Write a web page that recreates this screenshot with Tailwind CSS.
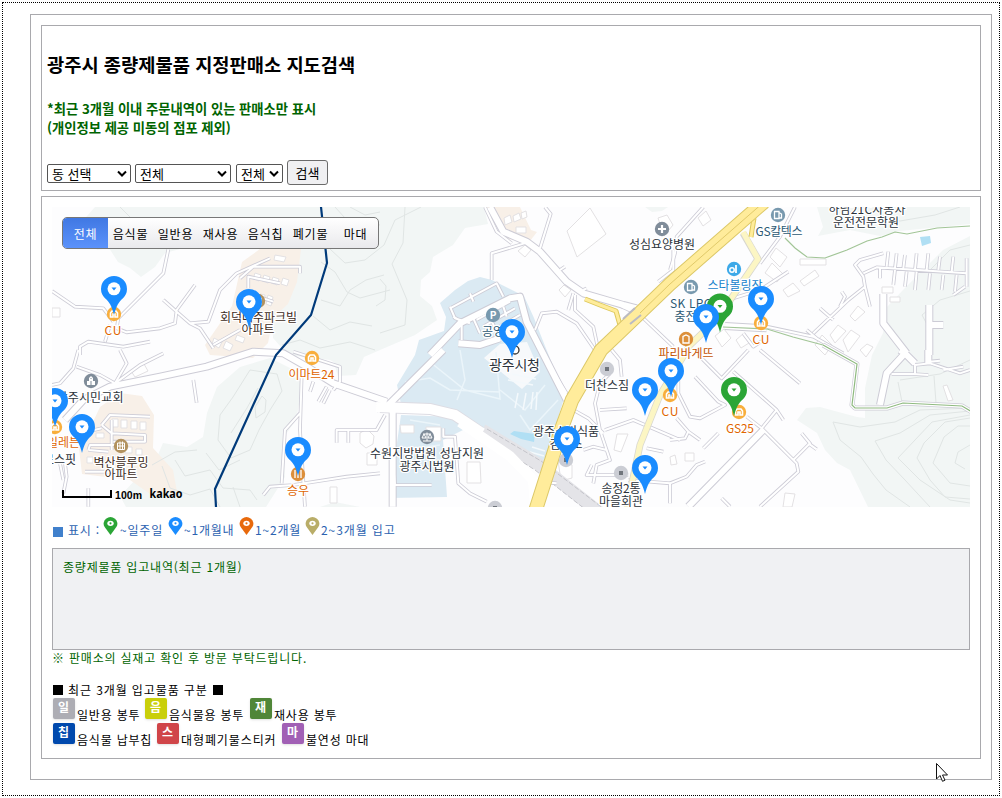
<!DOCTYPE html>
<html lang="ko">
<head>
  <meta charset="UTF-8" />
  <meta name="viewport" content="width=device-width, initial-scale=1.0" />
  <title>광주시 종량제물품 지정판매소 지도검색</title>
  <script src="https://cdn.jsdelivr.net/npm/@tailwindcss/browser@4"></script>
</head>
<body class="bg-white text-black font-['Noto_Sans_CJK_KR',sans-serif] w-[1002px] h-[798px] overflow-hidden p-[2px]">
  <div class="border border-dotted border-black w-[998px] h-[794px] pl-[27px] pt-[11px]">
    <div class="border border-[#a9a9ad] w-[962px] h-[766px] p-[10px]">

      <!-- Search -->
      <section class="border border-[#a9a9ad] h-[166px] w-[940px] pl-[5px] pt-[24px]">
        <h3 class="text-[18.72px] leading-[27px] font-bold">광주시 종량제물품 지정판매소 지도검색</h3>
        <h4 class="mt-[22px] text-[13.33px] leading-[19px] tracking-[-0.03px] font-bold text-[#006400]">*최근 3개월 이내 주문내역이 있는 판매소만 표시<br>(개인정보 제공 미동의 점포 제외)</h4>
        <form class="mt-[23px] flex items-start text-[13px] leading-[17px]">
          <div class="relative mt-[4px] w-[84px] h-[19px] border border-[#555] rounded-[2px] pl-[4px]">동 선택
            <svg class="absolute right-[3px] top-[5px]" width="10" height="8" fill="none" stroke="#000" stroke-width="2"><path d="M1 1.5 5 5.5 9 1.5"/></svg>
          </div>
          <div class="relative mt-[4px] ml-[4px] w-[96px] h-[19px] border border-[#555] rounded-[2px] pl-[4px]">전체
            <svg class="absolute right-[3px] top-[5px]" width="10" height="8" fill="none" stroke="#000" stroke-width="2"><path d="M1 1.5 5 5.5 9 1.5"/></svg>
          </div>
          <div class="relative mt-[4px] ml-[5px] w-[47px] h-[19px] border border-[#555] rounded-[2px] pl-[4px]">전체
            <svg class="absolute right-[3px] top-[5px]" width="10" height="8" fill="none" stroke="#000" stroke-width="2"><path d="M1 1.5 5 5.5 9 1.5"/></svg>
          </div>
          <button type="button" class="ml-[4px] w-[41px] h-[25px] border border-[#6b6b6b] rounded-[3px] bg-[#f0f0f2]">검색</button>
        </form>
      </section>

      <section class="mt-[5px] border border-[#a9a9ad] h-[563px] w-[940px] p-[10px] text-[12px] tracking-[0.8px]">
        <!-- Map -->
        <div class="relative h-[300px] w-[918px] overflow-hidden">
          <svg class="block tracking-normal" width="918" height="300" viewBox="52 207 918 300" font-size="12" text-anchor="middle">
            <defs>
              <g id="pin">
                <path d="M0 39.500C-2 31-5 26-9 22.800A13 13 0 1 1 9 22.800C5 26 2 31 0 39.500Z"/>
                <circle cy="13.300" r="6.500" fill="#fff"/>
                <path d="M-2.500 12h5L0 15Z"/>
              </g>
              <g id="store" fill="none" stroke="#fff" stroke-width="1.600"><circle r="7.200" fill="#f8ae3c" stroke="none"/><path d="M-3.500 3V-1L-2-3H2L3.500-1V3H1V0H-1V3Z"/></g>
              <g id="apt"><circle r="7.200" fill="#b2925f"/><path d="M-3.500-3H3.500V3.500H-3.500ZM-1-4.500V3.500M1.500-4.500V3.500M-3.500 0H3.500" fill="none" stroke="#fff" stroke-width="1"/></g>
              <g id="gas"><circle r="7.200" fill="#7899ae"/><path d="M-3.500-3.500H1V3.500H-3.500ZM1-2.500 3.500-1V3H1" fill="none" stroke="#fff" stroke-width="1.300"/></g>
              <g id="spot"><circle r="7.200" fill="#cbcdd4"/><path d="M-2-2H2V2H-2Z" fill="#70757c"/></g>

              <!-- road classes, one path per survey tile -->
              <g id="lanes" fill="none" stroke-linejoin="round">
                <path transform="translate(40 195) scale(.3333)" d="M36 288 105 335 190 340 220 380 M385 163 370 235 235 370 230 400 260 412 360 400 405 385 410 345 465 270 M370 315 410 350 450 385 505 380 540 285 590 235 690 190 M120 480 120 455 145 440 250 455 330 440 M195 440 210 390 M450 385 480 400 520 460 M600 250 640 215 780 215 780 235 M625 280 625 245 720 265 M610 290 700 320 M520 450 600 405"/>
                <path transform="translate(40 350) scale(.3333)" d="M36 105 60 100 100 55 115 0 M110 50 180 75 225 100 260 40 240 0 M225 100 300 45 370 10 M460 90 470 158 M785 80 780 240 795 470 M780 190 735 240 725 400 M670 435 690 410 760 405 920 380 1020 370 M1035 195 1010 240 890 240 890 278 M925 240 925 278 M760 5 900 50 900 95 880 120 M860 110 835 155 M870 120 850 160 M820 95 810 125 M185 225 210 195 330 200 M185 225 215 250 315 255 315 275 220 275 M215 210 215 300 M145 300 150 285 240 285 M145 300 205 305 M120 250 185 235 M135 365 230 365 M60 340 70 390 M75 340 80 380 70 430 M145 415 145 470"/>
                <path transform="translate(380 200) scale(.3333)" d="M315 21 350 95 395 130 M495 21 512 42 480 145 M440 128 335 160 335 240 M540 210 555 200 M610 270 620 265 M880 150 880 210 835 245 M580 280 565 330 M585 285 585 330 640 380 655 450 M465 390 485 340 530 335 590 370 645 450 M210 325 350 250 370 290 M210 320 225 355 270 370 M270 280 280 305 M220 350 245 365 245 420 M290 360 390 305 M310 380 405 325 M350 385 420 345 M280 355 300 400 M325 340 345 385 M370 320 380 350 M725 320 780 345 880 440"/>
                <path transform="translate(380 350) scale(.3333)" d="M580 180 625 205 670 250 M695 0 720 30 725 80 M690 70 660 100 645 160 660 240 690 330 650 345 640 400 M660 180 740 175 M675 240 760 210 900 270 M800 295 850 305 M635 345 620 375 745 375 M610 300 640 290 680 300 M745 390 870 400 870 460 M190 235 190 260 225 260 235 400 270 430 320 455 M40 350 45 405 155 405 M480 395 530 400 M490 15 560 130"/>
                <path transform="translate(670 200) scale(.3333)" d="M0 210 15 160 20 110 100 21 M375 21 330 110 270 190 M640 160 570 180 555 195 580 230 585 260 535 300 430 400 M580 220 620 202 890 220 M655 155 650 200 M680 160 675 205 M705 165 700 205 M740 160 735 210 M775 160 770 210 M810 170 805 210 M850 170 845 215 M890 175 890 260 M630 200 630 235 M675 210 670 255 M710 215 705 260 M740 215 735 270 M780 220 775 270 M820 225 815 270 M860 225 855 275 M885 260 850 285 M585 260 600 320 M450 325 490 360 M515 275 525 290 510 320 M410 390 440 415 M190 295 270 270 355 215 M290 380 430 410 520 460 M220 400 250 440 280 420"/>
                <path transform="translate(670 350) scale(.3333)" d="M25 90 25 130 60 200 90 205 165 165 145 155 75 80 M90 20 155 85 235 0 M270 0 390 100 M190 65 320 180 340 210 M320 180 275 235 230 200 M275 235 380 340 385 365 270 470 M370 330 420 280 395 250 M415 280 440 298 M0 270 45 265 55 245 20 205 M55 245 90 270 M100 295 145 250 M0 400 50 380 80 345 105 335 M155 445 180 470 M665 72 730 72 775 75 M735 70 735 45 720 30 M735 45 780 40 870 70 900 60 M780 35 810 32 M820 60 880 50"/>
              </g>
              <g id="streets" fill="none" stroke-linejoin="round">
                <path transform="translate(40 350) scale(.3333)" d="M75 210 130 150 210 110 360 80 500 50 640 5 730 10 800 50 880 100 1040 155"/>
                <path transform="translate(380 200) scale(.3333)" d="M330 21 370 95 440 125 480 155 560 245 610 280 730 315 770 325 M150 465 240 370 390 295 420 290 440 365 560 600 M235 430 300 435 360 415"/>
                <path transform="translate(380 350) scale(.3333)" d="M-10 175 20 170 60 130 190 0 M38 180 38 470"/>
                <path transform="translate(670 200) scale(.3333)" d="M640 282 640 370 710 460 M778 315 778 465 M778 375 820 375 M165 378 290 385"/>
                <path transform="translate(670 350) scale(.3333)" d="M55 470 280 240 M630 165 650 70 705 10 735 40 M705 10 690 0 M775 0 775 40"/>
              </g>
              <clipPath id="frame"><path d="M52 207H970V507H52Z"/></clipPath>
            </defs>
            <g clip-path="url(#frame)">
              <path fill="#fdfdfe" d="M52 207H970V507H52Z"/>

              <!-- hills -->
              <g fill="#f2f6f5">
                <path d="M95 207 79 225 97 250 109 248 118 262 130 268 141 277 155 267 165 253 180 249 300 249 296 280 272 316 273 338 288 355 330 360 356 375 364 357 380 350 415 335 437 320 432 306 420 296 421 280 430 272 433 257 453 245 465 228 488 224 484 207Z"/>
                <path d="M240 367 270 358 296 371 303 383 296 420 284 437 285 477 266 507 126 507 120 496 157 457 163 443 187 447 203 437 207 413 217 387Z"/>
                <path d="M333 360 345 359 356 375 338 376Z"/>
                <path d="M645 207 652 212 662 211 668 207Z M817 207 823 227 818 236 850 230 880 236 900 231 970 224V207Z M970 236 943 250 903 290 887 307 883 333 872 355 865 388V418L857 417 820 407 806 408 797 420 817 433 825 450 837 463 850 470 868 507H970Z"/>
                <path d="M320 507 335 502 360 507Z"/>
              </g>
              <path fill="#f8f0e8" d="M260 249H301L297 282 288 304 273 318 268 343 253 358 210 355 205 345 232 306 242 262Z M100 407 120 393 142 396 154 415 153 448 173 470 177 492 150 494 130 480 82 474 78 440 92 424Z M487 207 505 239 530 241 537 232 531 230 520 207Z"/>

              <!-- contours -->
              <g fill="none" stroke="#e0e5e4" stroke-width="1">
                <path d="M120 207 135 222 175 218 210 232 240 223 M335 207 345 218 380 225 M350 207 365 215 380 212 M330 249 345 263 365 260 384 245 395 220 421 207 M321 300 340 306 350 290 366 280 384 275 M313 316 330 330 350 322 372 326 M321 262 335 272 347 292 360 298 390 290 M405 207 403 243 392 264 407 300 405 325 380 333 M380 279 386 286 385 300 376 306 M282 345 300 340 320 348 350 342 375 350"/>
                <path d="M250 370 233 397 220 415 218 440 231 458 250 450 259 430 270 410 282 391 277 374Z M258 388 247 408 231 433 M262 396 255 407 256 418 265 412 266 400Z M175 460 185 476 210 470 223 488 250 490 257 500 M162 466 170 488 190 495 210 489 220 507 M206 453 219 470 240 460 M240 507 233 487 M152 465 175 452 197 450"/>
                <path d="M833 422 840 440 861 457 873 474 886 490 910 507 M833 422 860 427 895 422 920 410 970 408 M875 441 900 433 930 415 970 411 M875 441 886 460 905 480 930 507 M898 458 915 440 932 422 970 415 M898 458 920 480 950 500 970 503 M917 458 924 443 945 422 970 418 M917 458 930 480 945 497 970 499 M933 463 944 437 958 426 970 426 M933 463 950 483 970 486 M970 445 958 452 955 463 965 469 M845 207 860 220 900 221 935 215 960 207 M930 270 950 250 970 245 M930 330 922 315 940 300 970 291 M900 380 940 374 970 360 M898 382 902 402 M934 376 936 403"/>
              </g>

              <!-- civic grounds -->
              <path fill="#dbeaf3" d="M415 355 419 340 444 331 446 317 440 303 455 290 468 281 480 277 492 280 524 296 534 318 545 346 565 395 556 425 549 459 535 465 510 455 486 430 457 411 430 407 401 404 397 385Z M401 415 458 417 463 430 443 440 447 497 389 498Z"/>
              <path fill="#f7f9fb" d="M484 358 500 344 527 342 540 372 522 389 506 376Z"/>
              <g fill="none" stroke="#ebf5fa" stroke-width="1.500">
                <path d="M430 362 465 390 500 399 496 352 M405 382 430 378 450 390 500 392 M460 350 465 380 457 400 M500 390 525 410 545 385 M520 415 530 430 558 400 M410 420 440 425 M405 450 440 445"/>
              </g>
              <path fill="none" stroke="#f4f9fc" stroke-width="1.500" d="M518 393 515 408M526 393 523 410M533 392 531 409M537 392 536 410M532 447 545 451M530 452 544 456M533 385 508 380M536 379 512 374"/>
              <path fill="#b0dff4" d="M510 434 514 431 535 434 534 442 521 439Z M920 237 930 236 931 243 922 246Z"/>

              <!-- buildings -->
              <g fill="#fff" stroke="#e3e1e3" stroke-width="1">
                <path d="M567 231 590 208 606 234 577 257Z M518 251 525 245 531 250 525 257Z M559 290 564 285 571 290 565 297Z M658 218 667 215 673 225 664 236Z M516 227H526V233H516Z M800 259H826V265H800Z M882 287H893V293H882Z M890 297H900V302H890Z"/>
                <path d="M255 273 261 275 259 281 253 279Z M264 275 270 277 268 283 262 281Z M273 277 279 279 277 285 271 283Z M283 278 289 280 287 286 281 284Z M275 255 286 257 284 262 274 260Z M214 338 222 342 219 348 212 344Z M226 341 233 345 230 351 223 348Z M260 294 265 295 264 305 259 304Z M268 295 273 297 271 306 266 304Z M237 335 245 338 243 343 235 340Z"/>
                <path d="M112 419H118V427H112Z M121 420H127V428H121Z M131 421H137V429H131Z M140 422H146V430H140Z M125 447H132V453H125Z M136 449H142V455H136Z M96 433H104V438H96Z M87 457H93V463H87Z M330 487H337V503H330Z M360 433 367 429 374 436 373 444 366 448 360 443Z M367 453H377V465H367Z M131 371 144 364 148 371 135 377Z M52 308H60V317H52Z"/>
                <path d="M504 218 510 215 512 222 505 225Z M513 216 519 213 521 219 514 222Z M521 213 526 211 527 217 522 219Z M467 462 480 462 481 483 467 483Z M400 425 414 425 414 433 401 433Z M426 427 441 427 441 441 426 441Z M558 460 572 465 572 478 561 481Z M617 434 628 434 621 452 614 450Z"/>
                <path d="M698 218 706 211 711 220 703 226Z M770 257 776 248 787 257 780 267Z M765 273 772 263 783 274 777 282Z M783 290 793 283 800 291 788 297Z M800 281 815 270 819 276 804 286Z M715 336 724 329 731 338 722 347Z M736 340 744 333 749 343 741 348Z M850 316 858 306 865 312 855 321Z M830 335 838 325 846 331 835 343Z M843 340 851 330 860 336 848 352Z M815 345 822 335 832 345 825 355Z M785 493 795 494 792 507H783Z M685 453H694V461H685Z M670 457 675 455 677 464 671 465Z M943 386 947 385 953 400 948 401Z M860 350 867 344 873 347 866 357Z"/>
              </g>

              <!-- railway -->
              <path fill="none" stroke="#e4e4e8" stroke-width="13" d="M482 430 538 464 600 513"/>
              <path fill="none" stroke="#c4c4ca" stroke-dasharray="5 2" d="M487 429 541 461 604 509M482 436 535 470 590 513"/>

              <use href="#lanes" stroke="#cdccd6" stroke-width="11"/>
              <use href="#streets" stroke="#cdccd6" stroke-width="24"/>
              <path fill="none" stroke="#dddce3" stroke-width="12" d="M380 407 430 409 455 415 480 432"/>
              <use href="#lanes" stroke="#fff" stroke-width="6"/>
              <use href="#streets" stroke="#fff" stroke-width="18"/>
              <path fill="none" stroke="#fff" stroke-width="10" d="M376 407 430 409 455 415 482 433"/>
              <path fill="none" stroke="#fff" stroke-width="10" d="M460 422 510 456 533 480 535 507"/>

              <!-- arterials -->
              <g fill="none" stroke-linejoin="round">
                <path stroke="#d8d7cf" stroke-width="7" d="M743 233 758 259 718 318 690 345 660 395 640 445 627 507"/>
                <path stroke="#fcf6c4" stroke-width="5.500" d="M743 232 758 259 718 318 690 345 660 395 640 445 627 507"/>
                <path stroke="#dec95c" stroke-width="5" d="M585 299 600 305 616 311 620 325M754 218 751 237"/>
                <path stroke="#ffec9b" stroke-width="3" d="M585 299 600 305 616 311 620 325M754 218 751 237"/>
                <path stroke="#dcc868" stroke-width="14.500" d="M764 202 670 284 621 331 601 350 572 400 561 430 549 468 535 512"/>
                <path stroke="#ffec9b" stroke-width="12.500" d="M764 202 670 284 621 331 601 350 572 400 561 430 549 468 535 512"/>
                <path stroke="#d2ba55" stroke-width=".7" d="M764 202 670 284 640 313"/>
                <path stroke="#babac2" stroke-width="2" d="M623 319 635 308M630 324 641 315"/>
              </g>
              <path fill="none" stroke="#a2c597" stroke-width="1.200" d="M785 238 795 248 807 257 825 258 847 250 867 241 882 237 895 232 907 234 937 228 970 226M723 327 767 329 793 337 823 345"/>
              <path fill="none" stroke="#cdccd6" stroke-width="5" stroke-linejoin="round" d="M823 345 857 364 852 405 855 408 887 408 903 403 962 406 972 412"/>
              <path fill="none" stroke="#fff" stroke-width="3.600" stroke-linejoin="round" d="M823 345 857 364 852 405 855 408 887 408 903 403 962 406 972 412"/>
              <path fill="none" stroke="#8fba80" stroke-width="1.200" d="M823 345 857 364 852 405 855 408 887 408 903 403 962 406 972 412"/>
              <path fill="none" stroke="#003a7a" stroke-width="2.200" d="M321 207 327 263 311 315 276 355 215 489 216 507"/>

              <!-- place icons -->
              <use href="#store" x="114" y="314"/><use href="#store" x="312" y="358"/><use href="#store" x="55" y="427"/>
              <use href="#store" x="761" y="323"/><use href="#store" x="670" y="395"/><use href="#store" x="739" y="412"/>
              <use href="#apt" x="258" y="301"/><use href="#apt" x="121" y="446"/>
              <use href="#gas" x="778" y="215"/><use href="#gas" x="691" y="287"/>
              <use href="#spot" x="607" y="369"/><use href="#spot" x="621" y="473"/><use href="#spot" x="566" y="460"/><use href="#spot" x="495" y="508"/>
              <circle cx="298" cy="474" r="7.200" fill="#dc8f3a"/><path stroke="#fff" stroke-width="1.300" d="M295 470V478M298 470V478M301 470V478"/>
              <circle cx="686" cy="339" r="7.200" fill="#dc8f3a"/><path fill="none" stroke="#fff" stroke-width="1.300" d="M683 343V336.500L686 335 689 336.500V343Z"/>
              <circle cx="91" cy="381" r="7.200" fill="#808d9a"/><path fill="#fff" d="M87 385V381H89V378L91 376 93 378V381H95V385Z"/><path stroke="#808d9a" d="M91 381V385M91 378V379"/>
              <circle cx="427" cy="437" r="7.200" fill="#808d9a"/><path fill="none" stroke="#fff" d="M427 432.500V441M423 441H431M423 434H431M422 438 424 434 426 438ZM428 438 430 434 432 438Z"/>
              <circle cx="662" cy="229" r="7.200" fill="#808d9a"/><path stroke="#fff" stroke-width="2.200" d="M658 229H666M662 225V233"/>
              <circle cx="734" cy="269" r="7.200" fill="#3da9e8"/><circle cx="732" cy="270" r="2.200" fill="none" stroke="#fff" stroke-width="1.500"/><path stroke="#fff" stroke-width="1.800" d="M736 265V273"/>
              <circle cx="493" cy="315" r="7.200" fill="#7899ae"/><text x="493" y="319" font-size="10" font-weight="700" fill="#fff">P</text>
              <circle cx="515" cy="350" r="4" fill="#fff" stroke="#333" stroke-width="1.300"/>

              <!-- place names -->
              <g transform="translate(0 .8)" stroke="#fff" stroke-width="2.500" paint-order="stroke" stroke-linejoin="round" fill="#2b323a">
                <g fill="#e06500"><text x="113" y="334.500" textLength="17">CU</text><text x="311.500" y="378" textLength="46">이마트24</text><text x="80" y="446" text-anchor="end">세븐일레븐</text><text x="298" y="494.500">승우</text><text x="761" y="343.500" textLength="17">CU</text><text x="670" y="415.500" textLength="17">CU</text><text x="740" y="432.500" textLength="28">GS25</text></g>
                <g fill="#3d2b22"><text x="258.500" y="321" textLength="77">회덕대주파크빌</text><text x="258" y="333.500">아파트</text><text x="121" y="466" textLength="55">벽산블루밍</text><text x="121" y="478.500">아파트</text></g>
                <text x="90" y="401" textLength="67">광주시민교회</text><text x="76" y="463" text-anchor="end">로스핏</text>
                <text x="427" y="457.500" textLength="114">수원지방법원 성남지원</text><text x="427" y="470" textLength="55">광주시법원</text>
                <text x="514.500" y="369.500" font-size="14" textLength="51">광주시청</text><text x="607" y="389">더찬스짐</text>
                <text x="566" y="435" textLength="66">광주소비식품</text><text x="566" y="448">검사소</text>
                <text x="621" y="492" textLength="39">송정2통</text><text x="621" y="505.500">마을회관</text>
                <text x="662" y="248" textLength="66">성심요양병원</text><text x="867" y="213" textLength="77">하남21C자동차</text><text x="866" y="226" textLength="66">운전전문학원</text>
                <g fill="#2b5873"><text x="482" y="335" text-anchor="start">공영</text><text x="779" y="235" textLength="47">GS칼텍스</text><text x="691" y="307" textLength="42">SK LPG</text><text x="691" y="320">충전소</text></g>
                <text x="735" y="289" textLength="55" fill="#1682cb">스타볼링장</text><text x="686" y="357.500" textLength="55" fill="#c45403">파리바게뜨</text>
              </g>

              <!-- shop pins -->
              <g fill="#2ba536"><use href="#pin" x="720" y="293"/><use href="#pin" x="734" y="376.500"/></g>
              <g fill="#1a8cff">
                <use href="#pin" x="114" y="275.500"/><use href="#pin" x="249" y="288.500"/><use href="#pin" x="512" y="318.500"/>
                <use href="#pin" x="761" y="285.500"/><use href="#pin" x="706" y="303.500"/><use href="#pin" x="671" y="357.500"/>
                <use href="#pin" x="645" y="376.500"/><use href="#pin" x="645" y="454.500"/><use href="#pin" x="567" y="425.500"/>
                <use href="#pin" x="298" y="436.500"/><use href="#pin" x="82" y="413.500"/><use href="#pin" x="55" y="387.500"/>
              </g>

              <path fill="none" stroke="#000" stroke-width="2" d="M63 490V497H111V490"/>
              <text x="128.500" y="499" font-family="Liberation Sans" font-size="10.500" font-weight="700" textLength="27">100m</text>
              <text x="166" y="498" font-family="Noto Sans" font-size="13" font-weight="700" textLength="33" lengthAdjust="spacingAndGlyphs">kakao</text>
            </g>
          </svg>
          <!-- Category filter -->
          <ul class="absolute left-[10px] top-[10px] flex w-[317px] h-[32px] overflow-hidden rounded-[5px] border border-[#777] bg-gradient-to-b from-white to-[#e9e9ec] leading-[31px] text-center">
            <li class="w-[45px] bg-gradient-to-b from-[#4078e3] to-[#5b92fb] text-white">전체</li>
            <li class="w-[45px]">음식물</li>
            <li class="w-[45px]">일반용</li>
            <li class="w-[45px]">재사용</li>
            <li class="w-[45px]">음식칩</li>
            <li class="w-[45px]">폐기물</li>
            <li class="w-[45px]">마대</li>
          </ul>
        </div>

        <!-- Legend -->
        <div class="mt-[8px] flex h-[24px] items-start leading-[29px] text-[#2b62b0] whitespace-nowrap">
          <i class="mt-[12px] ml-[1px] mr-[5px] size-[10px] bg-[#4080cc]"></i>
          <span class="w-[35px]">표시 :</span>
          <svg class="mt-[2px] mr-[2px]" width="15" height="18" viewBox="-13 0 26 34"><path fill="#2ba536" d="M0 34-11 19A13 12 0 1 1 11 19Z"/><ellipse cy="12" rx="6" ry="5" fill="#fff"/><circle cy="12" r="2" fill="#2ba536"/></svg>
          <span class="w-[48px]">~일주일</span>
          <svg class="mt-[2px] mr-[1px]" width="15" height="18" viewBox="-13 0 26 34"><path fill="#1a8cff" d="M0 34-11 19A13 12 0 1 1 11 19Z"/><ellipse cy="12" rx="6" ry="5" fill="#fff"/><circle cy="12" r="2" fill="#1a8cff"/></svg>
          <span class="w-[55px]">~1개월내</span>
          <svg class="mt-[2px] mr-[1px]" width="15" height="18" viewBox="-13 0 26 34"><path fill="#e8690b" d="M0 34-11 19A13 12 0 1 1 11 19Z"/><ellipse cy="12" rx="6" ry="5" fill="#fff"/><circle cy="12" r="2" fill="#e8690b"/></svg>
          <span class="w-[50px]">1~2개월</span>
          <svg class="mt-[2px] mr-[1px]" width="15" height="18" viewBox="-13 0 26 34"><path fill="#b9ad68" d="M0 34-11 19A13 12 0 1 1 11 19Z"/><ellipse cy="12" rx="6" ry="5" fill="#fff"/><circle cy="12" r="2" fill="#b9ad68"/></svg>
          <span class="tracking-[0.9px]">2~3개월 입고</span>
        </div>

        <div class="mt-[9px] h-[102px] border border-[#a9a9ad] bg-[#f0f1f3] pl-[10px] pt-[9px] leading-[18px] text-[#006400]">종량제물품 입고내역(최근 1개월)</div>
        <p class="leading-[16px] text-[#006400]">※ 판매소의 실재고 확인 후 방문 부탁드립니다.</p>

        <div class="mt-[16px] flex h-[16px] items-center leading-[16px] tracking-[0.9px]">
          <i class="ml-[1px] mr-[5px] size-[10px] bg-black"></i>최근 3개월 입고물품 구분<i class="ml-[5px] size-[10px] bg-black"></i>
        </div>
        <div class="flex h-[25px] leading-[34px]">
          <b class="ml-[1px] mr-[2px] h-[21px] w-[22px] rounded-[2px] bg-[#adadb4] text-center leading-[18px] text-white shadow">일</b><span class="w-[68px]">일반용 봉투</span>
          <b class="mr-[2px] h-[21px] w-[22px] rounded-[2px] bg-[#c9cf0a] text-center leading-[18px] text-white shadow">음</b><span class="w-[81px]">음식물용 봉투</span>
          <b class="mr-[2px] h-[21px] w-[22px] rounded-[2px] bg-[#508638] text-center leading-[18px] text-white shadow">재</b><span>재사용 봉투</span>
        </div>
        <div class="flex h-[25px] leading-[34px]">
          <b class="ml-[1px] mr-[2px] h-[21px] w-[22px] rounded-[2px] bg-[#0049ad] text-center leading-[18px] text-white shadow">칩</b><span class="w-[80px]">음식물 납부칩</span>
          <b class="mr-[2px] h-[21px] w-[22px] rounded-[2px] bg-[#d04549] text-center leading-[18px] text-white shadow">스</b><span class="w-[101px] tracking-[0.9px]">대형폐기물스티커</span>
          <b class="mr-[2px] h-[21px] w-[22px] rounded-[2px] bg-[#a160b5] text-center leading-[18px] text-white shadow">마</b><span>불연성 마대</span>
        </div>
      </section>
    </div>
  </div>

  <!-- Pointer -->
  <svg class="absolute left-[936px] top-[763px]" width="13" height="20" viewBox="0 0 13 20"><path fill="#fff" stroke="#111" d="M.5.500V16L4 12.500 6.500 18.300 9 17.200 6.500 12H11.500Z"/></svg>
</body>
</html>
